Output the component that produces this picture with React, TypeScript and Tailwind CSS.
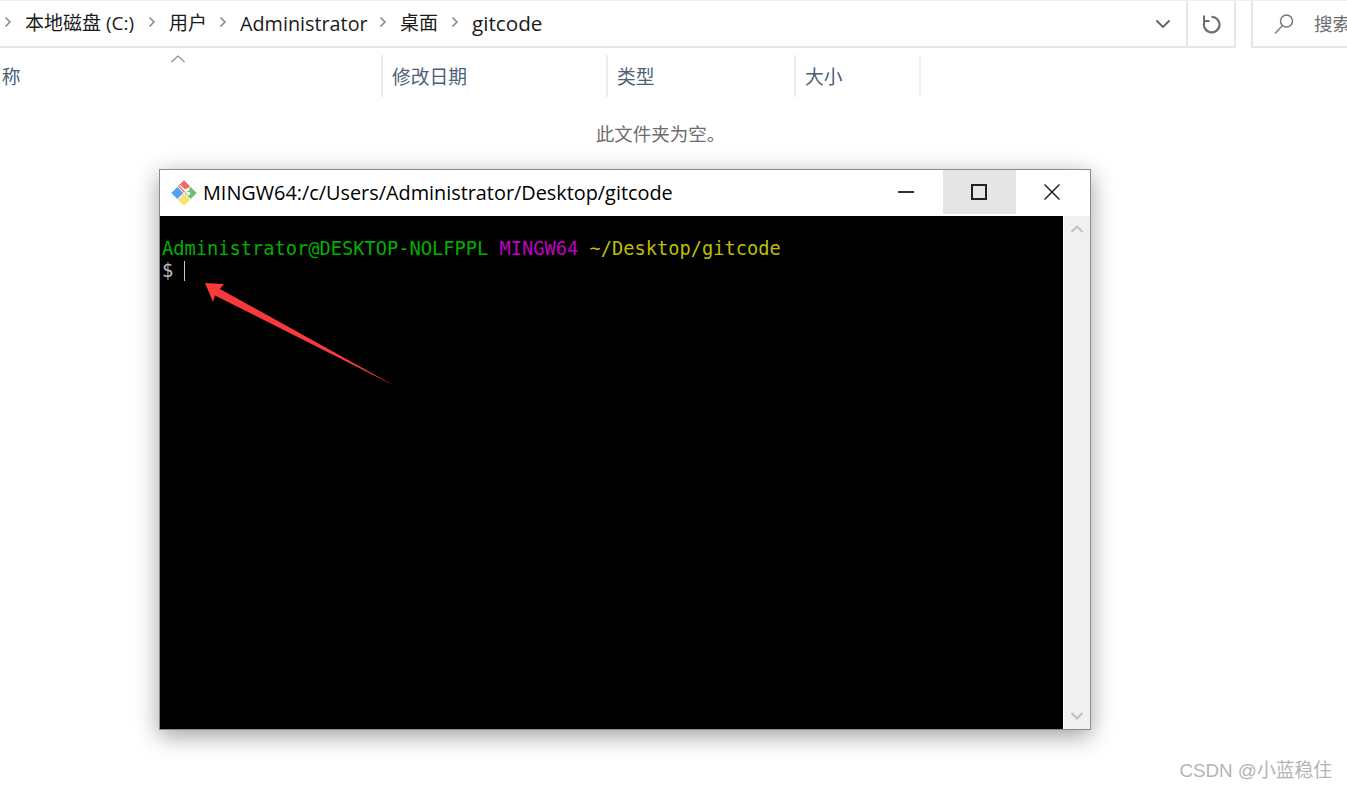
const uiFont = '"Open Sans", "Noto Sans CJK SC", sans-serif';

const crumbs = [
  { label: '本地磁盘 (C:)', width: 'w-[110px]', size: 'text-[19px]' },
  { label: '用户', width: 'w-[37px]', size: 'text-[19px]' },
  { label: 'Administrator', width: 'w-[126px]', size: 'text-[19.800px]' },
  { label: '桌面', width: 'w-[38px]', size: 'text-[19px]' },
  { label: 'gitcode', width: 'w-[71px]', size: 'text-[20.700px]' },
];

const columns = [
  { label: '修改日期', width: 'w-[225px]' },
  { label: '类型', width: 'w-[188px]' },
  { label: '大小', width: 'w-[125px]' },
];

function CrumbChevron() {
  return (
    <svg width="8" height="12" viewBox="0 0 8 12" className="mx-[13px] mb-[3px] shrink-0" fill="none">
      <path d="M1.500 1.500 6 6l-4.500 4.500" stroke="#7b7b7b" strokeWidth="1.400" />
    </svg>
  );
}

function GitLogo() {
  return (
    <svg width="26" height="26" viewBox="0 0 26 26" className="shrink-0">
      <g transform="rotate(45 13 13)">
        <rect x="4" y="4" width="8.600" height="8.600" fill="#f06a6a" />
        <rect x="13.400" y="4" width="8.600" height="8.600" fill="#68c46c" />
        <rect x="4" y="13.400" width="8.600" height="8.600" fill="#559ff2" />
        <rect x="13.400" y="13.400" width="8.600" height="8.600" fill="#f8e070" />
      </g>
      <path d="M9 5.500 17 13.500M13 10l4-0.500" stroke="#fff" strokeWidth="1.600" fill="none" />
      <circle cx="17.500" cy="13.500" r="1.800" fill="#fff" />
      <circle cx="17" cy="9.500" r="1.400" fill="#fff" />
    </svg>
  );
}

function TerminalWindow() {
  return (
    <div className="absolute left-[159px] top-[169px] flex h-[561px] w-[932px] flex-col border border-[#8c8c8c] bg-white shadow-[0_6px_22px_rgba(0,0,0,0.38)]">
      <div className="flex h-[46px] shrink-0 items-start bg-white pr-[1px]">
        <div className="flex h-[46px] min-w-0 flex-1 items-center pl-[11px]">
          <GitLogo />
          <span className="ml-[6px] whitespace-nowrap text-[19.850px] text-black" style={{ fontFamily: uiFont }}>
            MINGW64:/c/Users/Administrator/Desktop/gitcode
          </span>
        </div>
        <div className="flex h-[44px] w-[73px] items-center justify-center pr-[1px]">
          <div className="h-[2px] w-[16px] bg-[#333333]" />
        </div>
        <div className="flex h-[44px] w-[73px] items-center justify-center bg-[#e5e5e5] pr-[2px]">
          <div className="h-[16px] w-[16px] border-2 border-[#222222]" />
        </div>
        <div className="flex h-[44px] w-[73px] items-center justify-center pr-[1px]">
          <svg width="16" height="16" viewBox="0 0 16 16" fill="none">
            <path d="M.5.5l15 15M15.500.5l-15 15" stroke="#222222" strokeWidth="1.500" />
          </svg>
        </div>
      </div>
      <div className="flex min-h-0 flex-1">
        <div className="flex-1 bg-black pl-[2px] pt-[22px] text-[18.700px] leading-[22px]" style={{ fontFamily: '"DejaVu Sans Mono", monospace' }}>
          <div className="whitespace-pre">
            <span className="text-[#00b000]">Administrator@DESKTOP-NOLFPPL </span>
            <span className="text-[#c000c0]">MINGW64 </span>
            <span className="text-[#bfbf00]">~/Desktop/gitcode</span>
          </div>
          <div className="flex items-center whitespace-pre text-[#bfbfbf]">
            <span>$</span>
            <span className="ml-[11px] h-[20px] w-[1px] bg-[#c8c8c8]" />
          </div>
        </div>
        <div className="flex w-[27px] shrink-0 flex-col items-center justify-between border-l border-white bg-[#f0f0f0] py-[8px]">
          <svg width="14" height="10" viewBox="0 0 14 10" fill="none">
            <path d="M1.500 8 7 2.500 12.500 8" stroke="#c2c2c2" strokeWidth="2.200" />
          </svg>
          <svg width="14" height="10" viewBox="0 0 14 10" fill="none">
            <path d="M1.500 2 7 7.500 12.500 2" stroke="#c2c2c2" strokeWidth="2.200" />
          </svg>
        </div>
      </div>
    </div>
  );
}

export default function App() {
  return (
    <div className="relative h-[790px] w-[1347px] overflow-hidden bg-white" style={{ fontFamily: uiFont }}>
      {/* explorer toolbar */}
      <div className="flex h-[48px] items-stretch border-t border-[#f0f0f0]">
        <div className="flex w-[1236px] shrink-0 items-center border-b-2 border-r-2 border-[#e6e6e6]">
          <div className="-ml-[9px] flex min-w-0 flex-1 items-center text-[#1a1a1a]">
            {crumbs.map((c) => (
              <div key={c.label} className="flex items-center">
                <CrumbChevron />
                <span className={`${c.width} ${c.size} whitespace-nowrap`}>{c.label}</span>
              </div>
            ))}
          </div>
          <svg width="16" height="10" viewBox="0 0 16 10" className="mr-[15px]" fill="none">
            <path d="M1.500 1.500 8 8l6.500-6.500" stroke="#5f5f5f" strokeWidth="1.800" />
          </svg>
          <div className="flex h-full w-[48px] items-center justify-center border-l-2 border-[#e6e6e6]">
            <svg width="20" height="20" viewBox="0 0 20 20" fill="none">
              <path d="M10.500 2.800a7.800 7.800 0 1 1-6.600 4" stroke="#6e6e6e" strokeWidth="2.200" />
              <path d="M3 1.500v5.500h5.500" stroke="#6e6e6e" strokeWidth="2" />
            </svg>
          </div>
        </div>
        <div className="ml-[15px] flex min-w-0 flex-1 items-center overflow-hidden border-b-2 border-l-2 border-[#e6e6e6] pl-[20px]">
          <svg width="22" height="22" viewBox="0 0 22 22" fill="none" className="shrink-0">
            <circle cx="13.500" cy="8" r="6" stroke="#777777" strokeWidth="1.500" />
            <path d="M9.500 12.500 2 20.500" stroke="#9a8a78" strokeWidth="1.800" />
          </svg>
          <span className="ml-[19px] whitespace-nowrap text-[18.500px] text-[#6d6d6d]">搜索</span>
        </div>
      </div>

      {/* column headers */}
      <div className="relative mt-[7px] flex h-[42px] text-[18.750px] text-[#4c607a]">
        <div className="flex w-[381px] shrink-0 items-center overflow-hidden pt-[2px]">
          <span className="-ml-[17px]">名称</span>
        </div>
        <svg width="16" height="8" viewBox="0 0 16 8" className="absolute left-[170px] top-0" fill="none">
          <path d="M1.500 7 8 1l6.500 6" stroke="#8a8a8a" strokeWidth="1.100" />
        </svg>
        {columns.map((c) => (
          <div key={c.label} className={`${c.width} flex shrink-0 items-center border-l-2 border-[#ececec] pl-[9px] pt-[2px]`}>
            {c.label}
          </div>
        ))}
        <div className="w-0 border-l-2 border-[#ececec]" />
      </div>

      <div className="mt-[24px] w-[1321px] text-center text-[18.500px] leading-[26px] text-[#6d6d6d]">此文件夹为空。</div>

      <TerminalWindow />

      {/* annotation arrow */}
      <svg width="200" height="110" viewBox="0 0 200 110" className="absolute left-[200px] top-[280px]" fill="none">
        <path d="M5 3 24 4 20 9 195 106 15 15.500 13 22Z" fill="#f83a3a" />
      </svg>

      <div className="absolute bottom-[6px] right-[15px] text-[18.800px] leading-[26px] text-[#b4b4b4]" style={{ fontFamily: '"Liberation Sans", "Noto Sans CJK SC", sans-serif' }}>
        CSDN @小蓝稳住
      </div>
    </div>
  );
}
